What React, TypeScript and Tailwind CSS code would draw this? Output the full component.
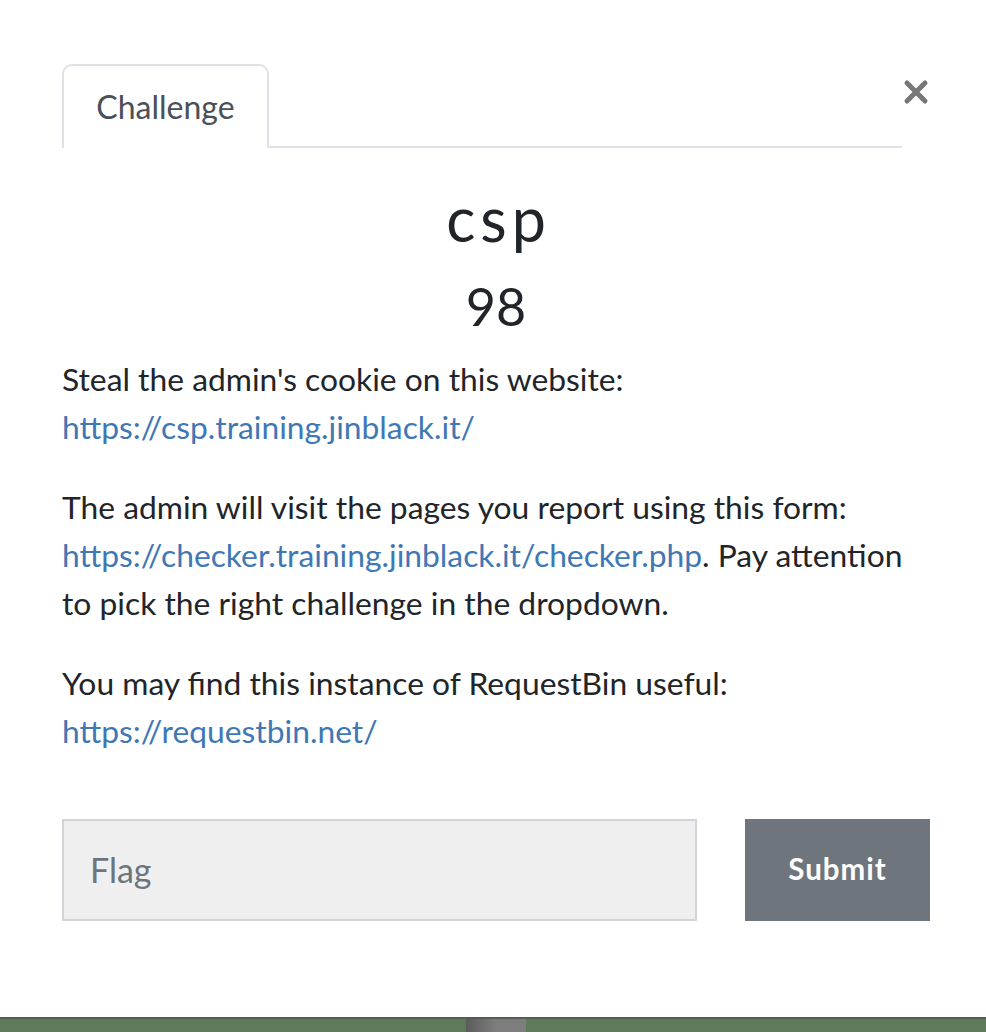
import React from "react";

export default function App() {
  return (
    <div className="w-[986px] h-[1032px] bg-white flex flex-col overflow-hidden font-['Lato','Liberation_Sans',sans-serif] text-[#212529]">
      <div className="pl-[62px] pr-[56px] pt-[64px]">
        <div className="flex items-start">
          <div className="w-[840px] flex border-b-2 border-[#dee2e6]">
            <div className="w-[207px] h-[84px] -mb-[2px] bg-white border-2 border-b-0 border-[#dee2e6] rounded-t-[10px] flex items-center justify-center text-[32px] text-[#495057]">
              Challenge
            </div>
          </div>
          <button className="ml-[1px] mt-[15px] w-[26px] h-[26px] flex items-center justify-center" aria-label="Close">
            <svg width="26" height="26" viewBox="0 0 26 26">
              <path d="M4 4 L22 22 M22 4 L4 22" stroke="#777" strokeWidth="5" strokeLinecap="round" />
            </svg>
          </button>
        </div>

        <div className="w-[868px]">
          <h2 className="mt-[34px] pl-[5px] text-center text-[61px] leading-[1.2] tracking-[5px]">csp</h2>
          <h4 className="mt-[20px] text-center text-[52px] leading-[1.2]">98</h4>

          <div className="mt-[17px] text-[31.8px] leading-[48px]">
            <p className="mb-[32px]">
              Steal the admin's cookie on this website:
              <br />
              <a className="text-[#3f78b5]" href="#">https://csp.training.jinblack.it/</a>
            </p>
            <p className="mb-[32px]">
              The admin will visit the pages you report using this form:{" "}
              <a className="text-[#3f78b5]" href="#">https://checker.training.jinblack.it/checker.php</a>. Pay attention to pick the right challenge in the dropdown.
            </p>
            <p className="mb-[32px]">
              You may find this instance of RequestBin useful:
              <br />
              <a className="text-[#3f78b5]" href="#">https://requestbin.net/</a>
            </p>
          </div>

          <div className="mt-[64px] flex gap-[48px]">
            <input
              placeholder="Flag"
              className="w-[635px] h-[102px] bg-[#efefef] border-2 border-[#d1d5d9] px-[26px] text-[34px] placeholder:text-[#6c757d] outline-none"
            />
            <button className="w-[185px] h-[102px] bg-[#6f757d] text-white font-bold text-[29.5px] tracking-[1px]">
              Submit
            </button>
          </div>
        </div>
      </div>

      <div className="mt-auto h-[15px] flex border-t-2 border-[#505f4f] bg-[#5f7a5b]">
        <div className="w-[466px]" />
        <div className="w-[60px] bg-gradient-to-r from-[#5c5c5c] via-[#7d7d7d] to-[#7d7d7d]" />
      </div>
    </div>
  );
}
